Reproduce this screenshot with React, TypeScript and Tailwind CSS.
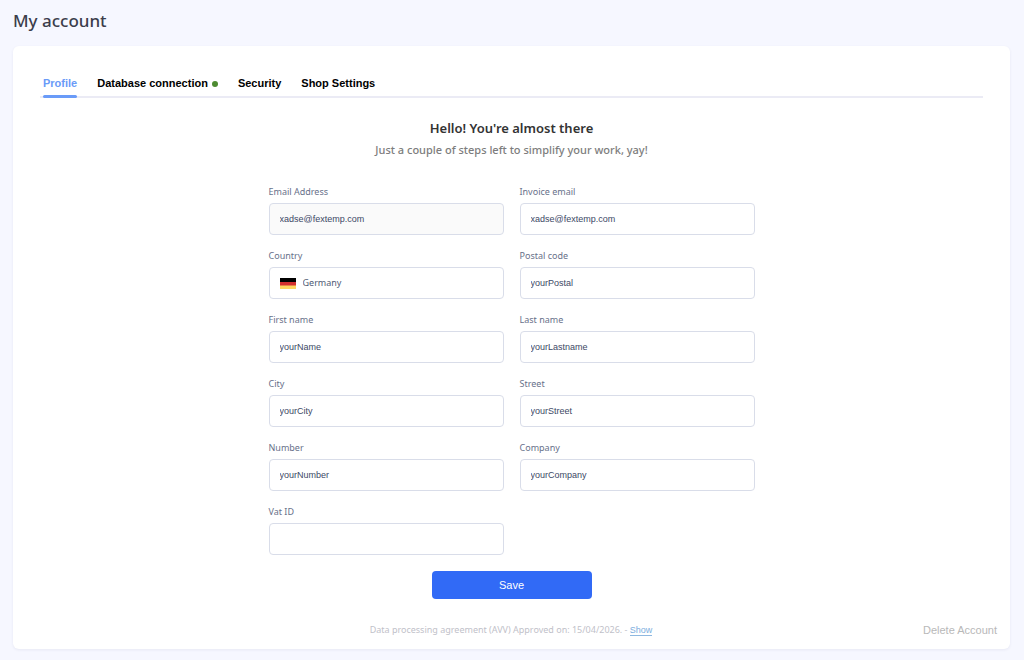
import { useState } from "react";

type FieldProps = {
  id: string;
  label: string;
  value: string;
  type?: string;
  readOnly?: boolean;
};

function Field({ id, label, value, type = "text", readOnly = false }: FieldProps) {
  return (
    <div className="flex flex-col gap-[3px]">
      <label htmlFor={id} className="text-[9px] leading-4 text-[#68718a]">
        {label}
      </label>
      <input
        id={id}
        type={type}
        defaultValue={value}
        readOnly={readOnly}
        className="h-8 w-full rounded border border-[#d9dde9] bg-white px-[10px] font-['Liberation_Sans',Arial,sans-serif] text-[9px] text-[#3c4865] outline-none read-only:bg-[#fafafa] focus:border-[#6a9bf8]"
      />
    </div>
  );
}

function GermanFlag() {
  return (
    <svg viewBox="0 0 16 11" className="h-[11px] w-4" aria-hidden="true">
      <rect width="16" height="4" fill="#000" />
      <rect y="4" width="16" height="4" fill="#d32f2f" />
      <rect y="7.5" width="16" height="3.5" fill="#ffd560" />
    </svg>
  );
}

function CountryField() {
  return (
    <div className="flex flex-col gap-[3px]">
      <label htmlFor="country" className="text-[9px] leading-4 text-[#68718a]">
        Country
      </label>
      <div className="relative">
        <select
          id="country"
          className="h-8 w-full appearance-none rounded border border-[#d9dde9] bg-white pr-3 pl-[33px] text-[9px] text-[#4f5b75] outline-none focus:border-[#6a9bf8]"
        >
          <option>Germany</option>
        </select>
        <span className="pointer-events-none absolute inset-y-0 left-[11px] flex items-center">
          <GermanFlag />
        </span>
      </div>
    </div>
  );
}

const tabs = ["Profile", "Database connection", "Security", "Shop Settings"];

export default function App() {
  const [active, setActive] = useState("Profile");

  return (
    <div className="min-h-screen bg-[#f6f7ff] pt-2 pr-[14px] pb-[11px] pl-[13px] font-['Noto_Sans','Open_Sans',sans-serif]">
      <h1 className="text-[17px] leading-[26px] font-medium text-[#3b3d4b]">My account</h1>

      <main className="mt-3 rounded-md bg-white px-[27px] pt-[27px] pb-[11px] shadow-[0_1px_3px_rgba(60,60,120,0.08)]">
        <nav className="flex gap-5 border-b-2 border-[#ebebf5] pl-[3px] font-['Liberation_Sans',Arial,sans-serif] text-[11px] font-bold">
          {tabs.map((tab) => (
            <button
              key={tab}
              type="button"
              onClick={() => setActive(tab)}
              className={
                tab === active
                  ? "relative -mb-[2px] flex h-[25px] items-start leading-5 text-[#6a9bf8] after:absolute after:inset-x-0 after:bottom-0 after:h-[3px] after:rounded-full after:bg-[#6a9bf8]"
                  : "flex items-start leading-5 text-black"
              }
            >
              {tab}
              {tab === "Database connection" && (
                <span className="mt-2 ml-1 size-[6px] rounded-full bg-[#4d8b31]" />
              )}
            </button>
          ))}
        </nav>

        <div className="mt-[19px] text-center">
          <h2 className="text-[13px] leading-[22px] font-semibold text-[#333]">Hello! You're almost there</h2>
          <p className="text-[11px] leading-[22px] font-medium text-[#7d7d7d]">
            Just a couple of steps left to simplify your work, yay!
          </p>
        </div>

        <form className="mx-auto mt-[23px] max-w-[486px]" onSubmit={(event) => event.preventDefault()}>
          <div className="grid grid-cols-2 gap-x-4 gap-y-[13px]">
            <Field id="email" label="Email Address" type="email" value="xadse@fextemp.com" readOnly />
            <Field id="invoice-email" label="Invoice email" type="email" value="xadse@fextemp.com" />
            <CountryField />
            <Field id="postal-code" label="Postal code" value="yourPostal" />
            <Field id="first-name" label="First name" value="yourName" />
            <Field id="last-name" label="Last name" value="yourLastname" />
            <Field id="city" label="City" value="yourCity" />
            <Field id="street" label="Street" value="yourStreet" />
            <Field id="number" label="Number" value="yourNumber" />
            <Field id="company" label="Company" value="yourCompany" />
            <Field id="vat-id" label="Vat ID" value="" />
          </div>
          <button
            type="submit"
            className="mx-auto mt-4 block h-7 w-40 rounded bg-[#316af6] font-['Liberation_Sans',Arial,sans-serif] text-[11px] text-white"
          >
            Save
          </button>
        </form>

        <footer className="-mr-[14px] mt-[23px] flex items-center">
          <p className="flex-1 pl-[59px] text-center text-[9px] leading-4 text-[#bfc1c9]">
            Data processing agreement (AVV) Approved on: 15/04/2026. -{" "}
            <a
              href="#agreement"
              className="border-b border-[#8fb8e0] font-['Liberation_Sans',Arial,sans-serif] text-[9px] text-[#7badde]"
            >
              Show
            </a>
          </p>
          <button
            type="button"
            className="font-['Liberation_Sans',Arial,sans-serif] text-[11px] leading-4 text-[#b8b8b8]"
          >
            Delete Account
          </button>
        </footer>
      </main>
    </div>
  );
}
